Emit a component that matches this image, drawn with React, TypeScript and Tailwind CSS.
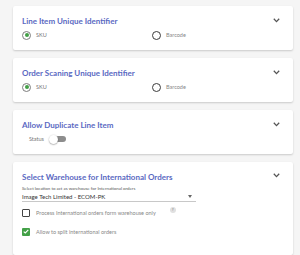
import React from "react";

const Chevron = () => (
  <svg width="7" height="5" viewBox="0 0 7 5" className="shrink-0">
    <path d="M0.8 0.8 L3.5 3.6 L6.2 0.8" fill="none" stroke="#555" strokeWidth="1.3" />
  </svg>
);

const Radio = ({ checked }: { checked: boolean }) => (
  <span
    className={`flex h-[9px] w-[9px] shrink-0 items-center justify-center rounded-full border-[1.5px] ${
      checked ? "border-[#7d7d7d]" : "border-[#3c3c3c]"
    }`}
  >
    {checked && <span className="block h-[4px] w-[4px] rounded-full bg-[#43a047]" />}
  </span>
);

const Card = ({ title, children, h }: { title: string; children: React.ReactNode; h: string }) => (
  <div className={`bg-white rounded-[2px] shadow-[0_1px_2px_rgba(0,0,0,0.18)] pl-[9px] pr-[13px] pt-[9px] ${h}`}>
    <div className="flex items-center justify-between h-[12px]">
      <span className="text-[8px] font-bold text-[#5a69c2] leading-[12px]">{title}</span>
      <span className="-mt-[2px]">
        <Chevron />
      </span>
    </div>
    {children}
  </div>
);

const RadioRow = () => (
  <div className="mt-[3px] flex items-center h-[10px]">
    <div className="flex items-center w-[130px] pl-[0px]">
      <Radio checked />
      <span className="ml-[5px] text-[5.5px] text-[#777]">SKU</span>
    </div>
    <div className="flex items-center">
      <Radio checked={false} />
      <span className="ml-[5px] text-[5.5px] text-[#888]">Barcode</span>
    </div>
  </div>
);

export default function App() {
  return (
    <div
      className="w-[300px] h-[255px] overflow-hidden bg-[#f5f5f5] pl-[13px] pr-[7px] pt-[6px] flex flex-col gap-[8px]"
      style={{ fontFamily: "Lato, 'Noto Sans', sans-serif" }}
    >
      <Card title="Line Item Unique Identifier" h="h-[47px]">
        <RadioRow />
      </Card>
      <Card title="Order Scaning Unique Identifier" h="h-[47px]">
        <RadioRow />
      </Card>
      <Card title="Allow Duplicate Line Item" h="h-[46px]">
        <div className="mt-[3px] flex items-center h-[10px] pl-[7px]">
          <span className="text-[5.5px] text-[#777]">Status</span>
          <span className="ml-[5px] relative flex items-center w-[17px] h-[9px]">
            <span className="absolute left-[3px] right-0 h-[6px] rounded-full bg-[#8d8d8d]" />
            <span className="absolute left-0 h-[9px] w-[9px] rounded-full bg-white shadow-[0_0.5px_1.5px_rgba(0,0,0,0.45)]" />
          </span>
        </div>
      </Card>
      <Card title="Select Warehouse for International Orders" h="h-[100px]">
        <div className="mt-[3px] text-[4.4px] leading-[6px] text-[#555]">
          Select location to act as warehouse for International orders
        </div>
        <div className="mt-[1px] w-[174px] border-b border-[#c8c8c8] flex items-center justify-between h-[9px] pb-[1px]">
          <span className="text-[6px] text-[#333]">Image Tech Limited - ECOM-PK</span>
          <span className="mr-[4px] block w-0 h-0 border-l-[2.5px] border-r-[2.5px] border-t-[3px] border-l-transparent border-r-transparent border-t-[#666]" />
        </div>
        <div className="mt-[6px] flex items-center h-[10px]">
          <span className="h-[8px] w-[8px] shrink-0 rounded-[1px] border-[1.5px] border-[#444]" />
          <span className="ml-[6px] text-[5.5px] text-[#888]">Process International orders form warehouse only</span>
          <span className="ml-[14px] -mt-[5px] flex h-[6px] w-[6px] items-center justify-center rounded-full bg-[#e0e0e0] text-[3.5px] text-[#666]">
            ?
          </span>
        </div>
        <div className="mt-[9px] flex items-center h-[10px]">
          <span className="flex h-[8px] w-[8px] shrink-0 items-center justify-center rounded-[1px] bg-[#43a047]">
            <svg width="6" height="5" viewBox="0 0 6 5">
              <path d="M0.7 2.6 L2.3 4 L5.3 0.9" fill="none" stroke="white" strokeWidth="1.1" />
            </svg>
          </span>
          <span className="ml-[6px] text-[5.5px] text-[#888]">Allow to split international orders</span>
        </div>
      </Card>
    </div>
  );
}
